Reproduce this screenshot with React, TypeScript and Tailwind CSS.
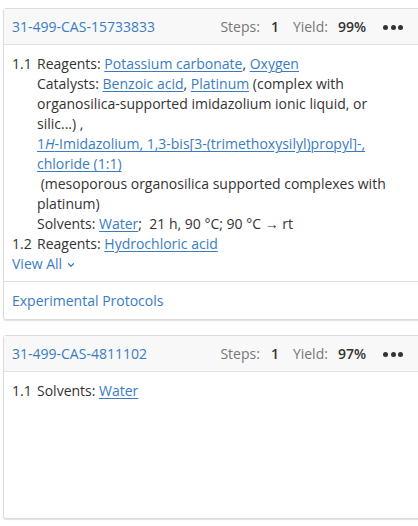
import { ChevronDown } from 'lucide-react';

const link = 'text-[#3a7cc3] underline underline-offset-2 decoration-1';

function Dots() {
  return (
    <div className="flex items-center gap-[2.5px] ml-[17px]">
      <span className="w-[5px] h-[5px] rounded-full bg-[#333]" />
      <span className="w-[5px] h-[5px] rounded-full bg-[#333]" />
      <span className="w-[5px] h-[5px] rounded-full bg-[#333]" />
    </div>
  );
}

function Header({ id, steps, yieldPct }: { id: string; steps: number; yieldPct: string }) {
  return (
    <div className="flex items-center h-[36px] pt-[1px] pl-[8px] pr-[19px] bg-[#f8f8f8] border-b border-[#e0e0e0]">
      <span className="text-[#3a7cc3]">{id}</span>
      <div className="ml-auto flex items-center">
        <span className="text-[#777]">Steps:</span>
        <span className="ml-[11px] font-semibold text-[#333]">{steps}</span>
        <span className="ml-[14px] text-[#777]">Yield:</span>
        <span className="ml-[10px] font-semibold text-[#333]">{yieldPct}</span>
        <Dots />
      </div>
    </div>
  );
}

export default function App() {
  return (
    <div
      className="w-[418px] h-[526px] overflow-hidden bg-white text-[14px] leading-[20px] text-[#333]"
      style={{ fontFamily: '"Open Sans", "Liberation Sans", sans-serif' }}
    >
      <div className="h-[8px]" />

      {/* Reaction 1 */}
      <div className="ml-[3px] w-[420px] border border-[#dcdcdc] rounded-[3px] shadow-[0_1px_1px_rgba(0,0,0,0.12)]">
        <Header id="31-499-CAS-15733833" steps={1} yieldPct="99%" />
        <div className="pl-[8px] pr-[22px] pt-[9px] pb-[7px]">
          <div className="flex">
            <span className="w-[25px] shrink-0">1.1</span>
            <div>
              <div>
                Reagents: <span className={link}>Potassium carbonate</span>,{' '}
                <span className={link}>Oxygen</span>
              </div>
              <div>
                Catalysts: <span className={link}>Benzoic acid</span>,{' '}
                <span className={link}>Platinum</span> (complex with organosilica-supported
                imidazolium ionic liquid, or silic...) ,
                <br />
                <span className={link}>
                  1<i>H</i>-Imidazolium, 1,3-bis[3-(trimethoxysilyl)propyl]-, chloride (1:1)
                </span>
                <br />
                {'\u00a0'}(mesoporous organosilica supported complexes with platinum)
              </div>
              <div>
                Solvents: <span className={link}>Water</span>;{'\u00a0'} 21 h, 90 °C; 90 °C → rt
              </div>
            </div>
          </div>
          <div className="flex">
            <span className="w-[25px] shrink-0">1.2</span>
            <div>
              Reagents: <span className={link}>Hydrochloric acid</span>
            </div>
          </div>
          <div className="flex items-center gap-[4px] text-[#3a7cc3]">
            View All <ChevronDown size={10} strokeWidth={3} className="mt-[1px]" />
          </div>
        </div>
        <div className="border-t border-[#e0e0e0] pl-[8px] pt-[9px] pb-[8px] text-[#3a7cc3]">
          Experimental Protocols
        </div>
      </div>

      <div className="h-[15px]" />

      {/* Reaction 2 */}
      <div className="ml-[3px] w-[420px] border border-[#dcdcdc] rounded-[3px] shadow-[0_1px_1px_rgba(0,0,0,0.12)]">
        <Header id="31-499-CAS-4811102" steps={1} yieldPct="97%" />
        <div className="pl-[8px] pr-[22px] pt-[9px] h-[146px]">
          <div className="flex">
            <span className="w-[25px] shrink-0">1.1</span>
            <div>
              Solvents: <span className={link}>Water</span>
            </div>
          </div>
        </div>
      </div>
    </div>
  );
}
